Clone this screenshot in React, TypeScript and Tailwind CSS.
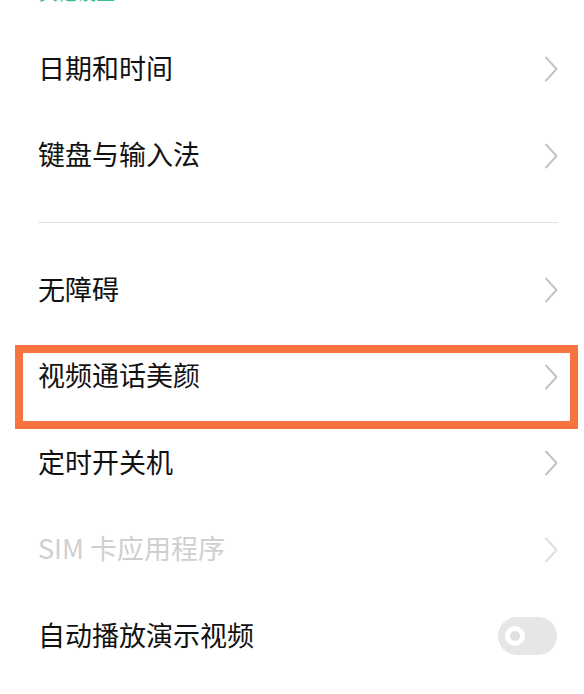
const font = { fontFamily: '"Noto Sans CJK SC", "Noto Sans", sans-serif' };

const Chevron = ({ faded }: { faded?: boolean }) => (
  <svg
    width="14"
    height="26"
    viewBox="0 0 14 26"
    fill="none"
    stroke={faded ? "#dedede" : "#c4c4c4"}
    strokeWidth="2"
    strokeLinecap="round"
    strokeLinejoin="round"
  >
    <path d="M2 1.5 L12.5 13 L2 24.5" />
  </svg>
);

const Row = ({ label, disabled }: { label: string; disabled?: boolean }) => (
  <div className="h-[86.5px] flex items-center justify-between pl-[38px] pr-[26px]">
    <span
      className={`text-[27px] leading-none pb-[4px] ${disabled ? "text-[#cfcfcf]" : "text-[#111]"}`}
    >
      {label}
    </span>
    <Chevron faded={disabled} />
  </div>
);

export default function App() {
  return (
    <div className="relative w-[584px] h-[694px] bg-white overflow-hidden" style={font}>
      {/* section header, scrolled mostly out of view */}
      <div className="h-[25.75px] overflow-hidden pl-[39px]">
        <div className="-mt-[18px] text-[19px] leading-[19px] text-[#35c08a]">其他设置</div>
      </div>

      <Row label="日期和时间" />
      <Row label="键盘与输入法" />

      <div className="h-[48px] flex items-center pl-[38px] pr-[26px]">
        <div className="w-full h-px bg-[#e2e2e2]" />
      </div>

      <Row label="无障碍" />
      <Row label="视频通话美颜" />
      <Row label="定时开关机" />
      <Row label="SIM 卡应用程序" disabled />

      <div className="h-[86.5px] flex items-center justify-between pl-[38px] pr-[27px]">
        <span className="text-[27px] leading-none pb-[4px] text-[#111]">自动播放演示视频</span>
        <div className="w-[59px] h-[38px] rounded-full bg-[#e6e6e6] flex items-center pl-[7px]">
          <div className="w-[20px] h-[20px] rounded-full bg-white flex items-center justify-center">
            <div className="w-[10px] h-[10px] rounded-full bg-[#e0e0e0]" />
          </div>
        </div>
      </div>

      {/* highlight annotation */}
      <div className="absolute left-[15px] top-[345px] w-[563px] h-[84px] border-[8px] border-[#f7733f] pointer-events-none" />
    </div>
  );
}
